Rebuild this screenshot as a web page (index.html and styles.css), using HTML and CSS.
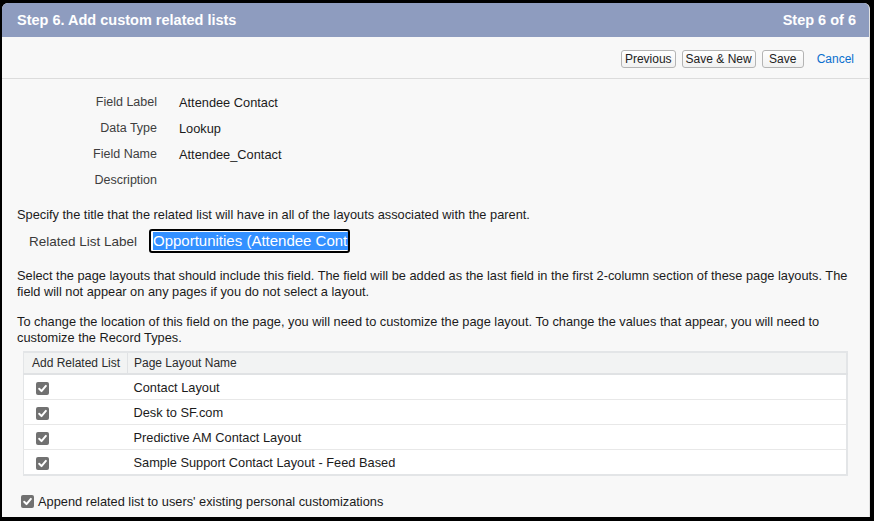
FILE: index.html
```html
<!DOCTYPE html>
<html>
<head>
<meta charset="utf-8">
<link rel="stylesheet" href="styles.css">
</head>
<body>
<div class="panel">
  <div class="header">
    <span class="title">Step 6. Add custom related lists</span>
    <span class="step">Step 6 of 6</span>
  </div>
  <div class="toolbar">
    <span class="btn">Previous</span>
    <span class="btn">Save &amp; New</span>
    <span class="btn btn-save">Save</span>
    <a class="cancel">Cancel</a>
  </div>
  <div class="fields">
    <div class="flabel">Field Label</div><div class="fvalue">Attendee Contact</div>
    <div class="flabel">Data Type</div><div class="fvalue">Lookup</div>
    <div class="flabel">Field Name</div><div class="fvalue">Attendee_Contact</div>
    <div class="flabel">Description</div><div class="fvalue"></div>
  </div>
  <p class="text p-specify">Specify the title that the related list will have in all of the layouts associated with the parent.</p>
  <div class="rl-row">
    <span class="rl-label">Related List Label</span>
    <div class="input"><span class="sel">Opportunities (Attendee Contact)</span></div>
  </div>
  <p class="text p-select">Select the page layouts that should include this field. The field will be added as the last field in the first 2-column section of these page layouts. The field will not appear on any pages if you do not select a layout.</p>
  <p class="text p-change">To change the location of this field on the page, you will need to customize the page layout. To change the values that appear, you will need to customize the Record Types.</p>
  <table class="layouts">
    <thead>
      <tr><th class="c1">Add Related List</th><th class="c2">Page Layout Name</th></tr>
    </thead>
    <tbody>
      <tr><td class="c1"><span class="cb"><svg viewBox="0 0 13 13" width="13" height="13"><path d="M3.2 6.8 L5.5 9.1 L9.9 3.9" fill="none" stroke="#fff" stroke-width="2" stroke-linecap="round" stroke-linejoin="round"/></svg></span></td><td class="c2">Contact Layout</td></tr>
      <tr><td class="c1"><span class="cb"><svg viewBox="0 0 13 13" width="13" height="13"><path d="M3.2 6.8 L5.5 9.1 L9.9 3.9" fill="none" stroke="#fff" stroke-width="2" stroke-linecap="round" stroke-linejoin="round"/></svg></span></td><td class="c2">Desk to SF.com</td></tr>
      <tr><td class="c1"><span class="cb"><svg viewBox="0 0 13 13" width="13" height="13"><path d="M3.2 6.8 L5.5 9.1 L9.9 3.9" fill="none" stroke="#fff" stroke-width="2" stroke-linecap="round" stroke-linejoin="round"/></svg></span></td><td class="c2">Predictive AM Contact Layout</td></tr>
      <tr><td class="c1"><span class="cb"><svg viewBox="0 0 13 13" width="13" height="13"><path d="M3.2 6.8 L5.5 9.1 L9.9 3.9" fill="none" stroke="#fff" stroke-width="2" stroke-linecap="round" stroke-linejoin="round"/></svg></span></td><td class="c2">Sample Support Contact Layout - Feed Based</td></tr>
    </tbody>
  </table>
  <div class="append">
    <span class="cb cb-append"><svg viewBox="0 0 13 13" width="13" height="13"><path d="M3.2 6.8 L5.5 9.1 L9.9 3.9" fill="none" stroke="#fff" stroke-width="2" stroke-linecap="round" stroke-linejoin="round"/></svg></span>
    <span class="append-text">Append related list to users' existing personal customizations</span>
  </div>
</div>
</body>
</html>
```
FILE: styles.css
```css
html, body {
  margin: 0;
  padding: 0;
}
body {
  background: #000;
  padding: 3px 4px 4px 2px;
  font-family: "Liberation Sans", Arial, sans-serif;
  color: #1b1b1b;
}
.panel {
  width: 867px;
  height: 514px;
  background: #f8f8f8;
  border-right: 1px solid #e2e2e2;
  border-radius: 6px 6px 0 0;
  overflow: hidden;
  display: flex;
  flex-direction: column;
}
.header {
  height: 34px;
  background: #8e9cbf;
  color: #fff;
  font-weight: bold;
  font-size: 14.5px;
  display: flex;
  align-items: center;
  justify-content: space-between;
  padding: 0 13px 0 15px;
}
.toolbar {
  border-bottom: 1px solid #dcdcdc;
  display: flex;
  align-items: center;
  justify-content: flex-end;
  padding-right: 15px;
  padding-top: 3px;
  box-sizing: border-box;
  height: 42px;
}
.btn {
  display: inline-flex;
  align-items: center;
  justify-content: center;
  height: 18px;
  box-sizing: border-box;
  padding: 0 3px;
  border: 1px solid #b4b4b4;
  border-radius: 3px;
  background: linear-gradient(#ffffff, #f1f1f1);
  color: #222;
  font-size: 12px;
  margin-left: 6px;
}
.btn:first-child { margin-left: 0; }
.btn-save { min-width: 42px; }
.cancel {
  color: #0a6fce;
  font-size: 12px;
  margin-left: 13px;
}
.fields {
  display: grid;
  grid-template-columns: 155px 1fr;
  column-gap: 22px;
  grid-auto-rows: 26px;
  padding-top: 10px;
  align-items: center;
}
.flabel {
  text-align: right;
  font-size: 12.5px;
  color: #3e3e3e;
}
.fvalue {
  font-size: 12.8px;
  color: #1b1b1b;
}
.text {
  margin: 0;
  padding: 0 12px 0 15px;
  font-size: 12.8px;
  line-height: 16px;
  color: #1b1b1b;
}
.p-specify { margin-top: 14px; }
.rl-row {
  margin-top: 6px;
  display: flex;
  align-items: center;
  padding-left: 27px;
  height: 24px;
}
.rl-label {
  font-size: 13.5px;
  color: #3a3a3a;
  width: 120px;
}
.input {
  width: 201px;
  height: 24px;
  box-sizing: border-box;
  border: 2px solid #000;
  border-radius: 3px;
  background: #fff;
  padding: 0 0 0 2px;
  overflow: hidden;
  white-space: nowrap;
  display: flex;
  align-items: center;
}
.sel {
  background: #3390ff;
  color: #fff;
  font-size: 15px;
  line-height: 18px;
}
.p-select { margin-top: 15px; }
.p-change { margin-top: 14px; }
.layouts {
  margin: 5px 21px 0 21px;
  width: 825px;
  border-collapse: collapse;
  border: 2px solid #e3e5e7;
  border-left-width: 1px;
  font-size: 12.8px;
}
.layouts th {
  background: #f2f3f3;
  font-weight: normal;
  font-size: 12px;
  color: #2b2b2b;
  text-align: left;
  height: 20px;
  padding: 0;
  border-bottom: 2px solid #e0e2e4;
}
.layouts th.c1 {
  width: 104px;
  padding-left: 8px;
  box-sizing: border-box;
  border-right: 1px solid #e0e2e4;
}
.layouts th.c2 { padding-left: 6px; }
.layouts td {
  background: #fff;
  height: 24px;
  padding: 0;
  border-bottom: 1px solid #e8e8e8;
  color: #1b1b1b;
}
.layouts tr:last-child td { border-bottom: none; }
.layouts td.c1 { padding-left: 12px; }
.layouts td.c2 { padding-left: 6px; }
.cb {
  display: inline-block;
  width: 13px;
  height: 13px;
  background: #717171;
  border-radius: 2px;
  vertical-align: middle;
}
.cb svg { display: block; }
.append {
  margin-top: 17px;
  display: flex;
  align-items: center;
  padding-left: 19px;
  height: 16px;
}
.cb-append { margin-right: 4px; }
.append-text {
  font-size: 12.8px;
  color: #1b1b1b;
}
```
